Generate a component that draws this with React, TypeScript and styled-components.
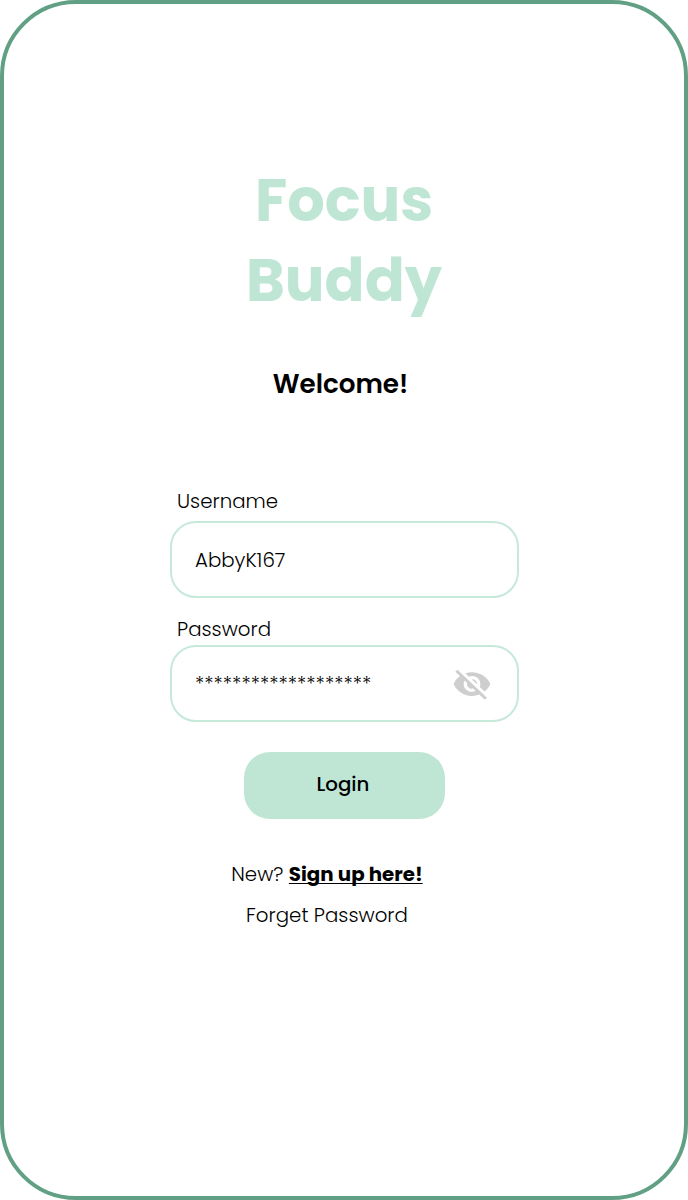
import React from 'react';
import styled, { createGlobalStyle } from 'styled-components';
import { MdVisibilityOff } from 'react-icons/md';

const mint = '#bfe6d5';
const fieldBorder = '#c6e9da';
const green = '#61a084';

const GlobalStyle = createGlobalStyle`
  *, *::before, *::after { box-sizing: border-box; }
  body {
    margin: 0;
    background: #fff;
    color: #000;
    font-family: Poppins, Inter, 'Liberation Sans', sans-serif;
  }
`;

const Screen = styled.main`
  display: flex;
  flex-direction: column;
  align-items: center;
  height: 1200px;
  padding-top: 157px;
  border: 4px solid ${green};
  border-radius: 76px;
  background: #fff;
`;

const Title = styled.h1`
  display: flex;
  flex-direction: column;
  align-items: center;
  margin: 0;
  color: ${mint};
  font-size: 59px;
  font-weight: 700;
  line-height: 80.4px;
`;

const Welcome = styled.h2`
  margin: 42px 7px 0 0;
  font-size: 26.2px;
  font-weight: 600;
  line-height: 40px;
`;

const Form = styled.form`
  display: flex;
  flex-direction: column;
  width: 349px;
  margin: 82px 0 0 1px;
`;

const Label = styled.label`
  padding-left: 7px;
  font-size: 19.8px;
  font-weight: 300;
  line-height: 30px;
`;

const Field = styled.div`
  display: flex;
  align-items: center;
  justify-content: space-between;
  height: 77px;
  padding: 1px 25.5px 0 23px;
  border: 2px solid ${fieldBorder};
  border-radius: 26px;
`;

const UsernameField = styled(Field)`
  margin: 5px 0 16px;
`;

const PasswordField = styled(Field)`
  margin-top: 1px;
`;

const Value = styled.span`
  font-size: 19.8px;
  font-weight: 300;
  line-height: 30px;
`;

const HiddenIcon = styled(MdVisibilityOff)`
  width: 40px;
  height: 38px;
  color: #cecece;
`;

const LoginButton = styled.button`
  align-self: center;
  width: 201px;
  height: 67px;
  margin-top: 30px;
  padding: 0 3px 2px 0;
  border: 0;
  border-radius: 26px;
  background: ${mint};
  color: #000;
  font: inherit;
  font-size: 19.8px;
  font-weight: 500;
`;

const Links = styled.nav`
  display: flex;
  flex-direction: column;
  align-items: center;
  gap: 11px;
  margin: 40px 34px 0 0;
  font-size: 19.8px;
  font-weight: 300;
  line-height: 30px;
`;

const SignUpLink = styled.a`
  font-weight: 700;
  text-decoration: underline;
  text-decoration-thickness: 1px;
  text-underline-offset: 2px;
  text-decoration-skip-ink: none;
`;

export default function App() {
  return (
    <>
      <GlobalStyle />
      <Screen>
        <Title>
          <span>Focus</span>
          <span>Buddy</span>
        </Title>
        <Welcome>Welcome!</Welcome>
        <Form onSubmit={(e) => e.preventDefault()}>
          <Label>Username</Label>
          <UsernameField>
            <Value>AbbyK167</Value>
          </UsernameField>
          <Label>Password</Label>
          <PasswordField>
            <Value>*******************</Value>
            <HiddenIcon preserveAspectRatio="none" />
          </PasswordField>
          <LoginButton type="submit">Login</LoginButton>
        </Form>
        <Links>
          <span>
            New? <SignUpLink>Sign up here!</SignUpLink>
          </span>
          <a>Forget Password</a>
        </Links>
      </Screen>
    </>
  );
}
